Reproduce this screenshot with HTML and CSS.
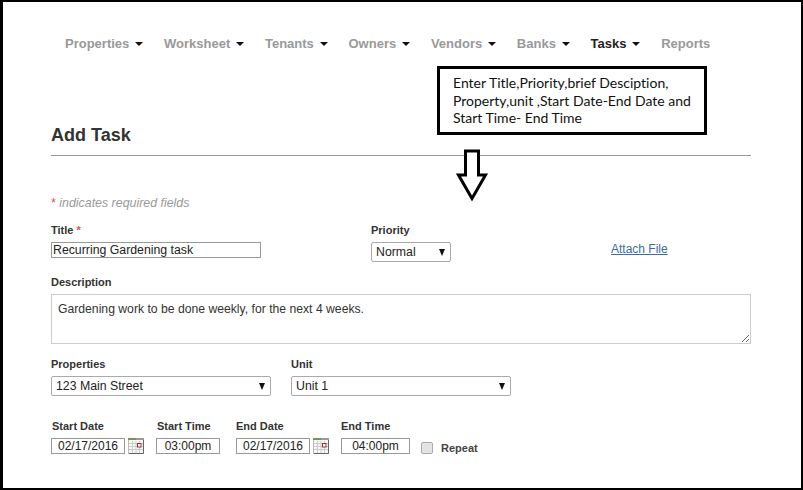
FILE: index.html
```html
<!DOCTYPE html>
<html lang="en">
<head>
<meta charset="utf-8">
<title>Add Task</title>
<link rel="stylesheet" href="styles.css">
</head>
<body>
<div class="frame">
  <nav class="nav">
    <a class="nav-item">Properties<i class="caret"></i></a>
    <a class="nav-item">Worksheet<i class="caret"></i></a>
    <a class="nav-item">Tenants<i class="caret"></i></a>
    <a class="nav-item">Owners<i class="caret"></i></a>
    <a class="nav-item">Vendors<i class="caret"></i></a>
    <a class="nav-item">Banks<i class="caret"></i></a>
    <a class="nav-item active">Tasks<i class="caret"></i></a>
    <a class="nav-item">Reports</a>
  </nav>

  <div class="callout">Enter Title,Priority,brief Desciption,<br>Property,unit ,Start Date-End Date and<br>Start Time- End Time</div>
  <svg class="arrow" width="34" height="54" viewBox="0 0 34 54"><path d="M9.5 2H22.5V26H29.5L16 49.5L2.5 26H9.5Z" fill="#fff" stroke="#000" stroke-width="3"/></svg>

  <main class="content">
    <h1 class="title">Add Task</h1>
    <p class="required"><span class="star">*</span> indicates required fields</p>

    <div class="row row-top">
      <div class="col col-title">
        <label class="label">Title <span class="star">*</span></label>
        <input class="input input-title" type="text" value="Recurring Gardening task">
      </div>
      <div class="col col-priority">
        <label class="label">Priority</label>
        <span class="select-wrap priority"><select class="select"><option>Normal</option></select></span>
      </div>
      <a class="attach" href="#">Attach File</a>
    </div>

    <div class="col col-desc">
      <label class="label">Description</label>
      <textarea class="textarea">Gardening work to be done weekly, for the next 4 weeks.</textarea>
    </div>

    <div class="row row-selects">
      <div class="col">
        <label class="label">Properties</label>
        <span class="select-wrap wide"><select class="select"><option>123 Main Street</option></select></span>
      </div>
      <div class="col">
        <label class="label">Unit</label>
        <span class="select-wrap wide"><select class="select"><option>Unit 1</option></select></span>
      </div>
    </div>

    <div class="row row-dates">
      <div class="col col-date">
        <label class="label label-inset">Start Date</label>
        <div class="date-line">
          <input class="input input-date" type="text" value="02/17/2016">
          <svg class="cal" width="16" height="16" viewBox="0 0 16 16"><rect x=".5" y=".5" width="15" height="15" fill="#f6f6f6" stroke="#bbb"/><path d="M1 5.5H15M1 8.5H15M1 11.5H15M4.5 3V15M8 3V15M11.5 3V15" stroke="#ccc" fill="none"/><rect x="0" y="0" width="16" height="2" fill="#9a9a9a"/><rect x="0" y="0" width="8" height="2" fill="#6f9a4a"/><rect x="9.5" y="5.5" width="3.5" height="3.5" fill="#fff" stroke="#a03030"/><path d="M15.5 2V15.5H1" stroke="#666" fill="none"/></svg>
        </div>
      </div>
      <div class="col col-time">
        <label class="label label-inset">Start Time</label>
        <input class="input input-time" type="text" value="03:00pm">
      </div>
      <div class="col col-date">
        <label class="label">End Date</label>
        <div class="date-line">
          <input class="input input-date" type="text" value="02/17/2016">
          <svg class="cal" width="16" height="16" viewBox="0 0 16 16"><rect x=".5" y=".5" width="15" height="15" fill="#f6f6f6" stroke="#bbb"/><path d="M1 5.5H15M1 8.5H15M1 11.5H15M4.5 3V15M8 3V15M11.5 3V15" stroke="#ccc" fill="none"/><rect x="0" y="0" width="16" height="2" fill="#9a9a9a"/><rect x="0" y="0" width="8" height="2" fill="#6f9a4a"/><rect x="9.5" y="5.5" width="3.5" height="3.5" fill="#fff" stroke="#a03030"/><path d="M15.5 2V15.5H1" stroke="#666" fill="none"/></svg>
        </div>
      </div>
      <div class="col col-endtime">
        <label class="label">End Time</label>
        <input class="input input-endtime" type="text" value="04:00pm">
      </div>
      <label class="repeat"><input class="check" type="checkbox"><span>Repeat</span></label>
    </div>
  </main>
</div>
</body>
</html>
```
FILE: styles.css
```css
* { box-sizing: border-box; }
html, body { margin: 0; padding: 0; background: #fff; }
body { font-family: "Liberation Sans", Arial, sans-serif; color: #333; }

.frame {
  position: relative;
  width: 803px;
  height: 490px;
  background: #fff;
  border-style: solid;
  border-color: #000;
  border-width: 2px 2px 2px 3px;
  overflow: hidden;
}

.nav {
  display: flex;
  gap: 21px;
  padding: 34px 0 0 62px;
  height: 100px;
}
.nav-item { font-size: 13px; line-height: 16px; font-weight: 700; color: #999; white-space: nowrap; }
.nav-item.active { color: #222; }
.caret {
  display: inline-block;
  width: 0;
  height: 0;
  margin-left: 5.7px;
  vertical-align: 2px;
  border-left: 4px solid transparent;
  border-right: 4px solid transparent;
  border-top: 4px solid #111;
}

.callout {
  position: absolute;
  left: 434px;
  top: 64px;
  width: 270px;
  height: 69px;
  border: 3px solid #000;
  padding: 5px 0 0 13px;
  background: #fff;
  font-family: "Lato", sans-serif;
  font-size: 14px;
  font-variant-ligatures: none;
  line-height: 17.5px;
  color: #111;
  white-space: nowrap;
  z-index: 2;
}
.arrow { position: absolute; left: 453px; top: 147px; z-index: 2; }

.content { padding: 0 0 0 48px; width: 748px; }
.title {
  margin: 0;
  height: 54px;
  padding-top: 22px;
  font-size: 18px;
  line-height: 22px;
  font-weight: 700;
  color: #333;
  border-bottom: 1px solid #999;
}
.required { margin: 40px 0 0; font-size: 12.4px; line-height: 14px; font-style: italic; color: #999; }
.star { color: #d9534f; font-style: normal; }

.row { display: flex; }
.col { display: flex; flex-direction: column; }
.label { display: block; font-size: 11px; line-height: 13px; font-weight: 700; color: #333; margin-bottom: 5px; }
.label-inset { padding-left: 1px; }

.row-top { margin-top: 14px; position: relative; }
.col-title { width: 320px; }
.col-priority { width: 240px; }
.attach { margin-top: 18px; font-size: 12px; line-height: 14px; color: #3a6ea5; text-decoration: underline; }

.input {
  display: block;
  height: 16px;
  padding: 0 1px;
  border: 1px solid #999;
  border-radius: 0;
  background: #fff;
  font-family: "Liberation Sans", Arial, sans-serif;
  font-size: 12px;
  color: #222;
  outline: none;
}
.input-title { width: 210px; font-size: 12.3px; }
.input-date { width: 74px; text-align: center; }
.input-time { width: 64px; text-align: center; }
.input-endtime { width: 69px; text-align: center; }

.select-wrap { position: relative; display: block; height: 20px; }
.select-wrap::after {
  content: "";
  position: absolute;
  right: 6px;
  top: 7px;
  border-left: 3.5px solid transparent;
  border-right: 3.5px solid transparent;
  border-top: 7px solid #111;
  pointer-events: none;
}
.select-wrap.priority { width: 80px; }
.select-wrap.wide { width: 220px; }
.select {
  appearance: none;
  display: block;
  width: 100%;
  height: 20px;
  padding: 0 4px;
  border: 1px solid #aaa;
  border-radius: 2px;
  background: #fff;
  font-family: "Liberation Sans", Arial, sans-serif;
  font-size: 12.3px;
  color: #222;
}

.col-desc { margin-top: 14px; }
.textarea {
  display: block;
  width: 700px;
  height: 50px;
  padding: 6px;
  border: 1px solid #ccc;
  border-radius: 0;
  font-family: "Liberation Sans", Arial, sans-serif;
  font-size: 12.2px;
  line-height: 16px;
  color: #333;
  outline: none;
}

.row-selects { gap: 20px; margin-top: 14px; }
.row-dates { margin-top: 24px; align-items: flex-start; }
.date-line { display: flex; align-items: center; gap: 3px; }
.cal { display: block; flex: none; }
.col-date { width: 105px; }
.col-time { width: 80px; }
.col-endtime { width: 80px; }

.repeat { display: flex; align-items: center; gap: 8px; margin-top: 21px; font-size: 11px; font-weight: 700; color: #444; line-height: 14px; }
.check {
  appearance: none;
  margin: 0;
  width: 12px;
  height: 12px;
  border: 1px solid #aaa;
  border-radius: 2px;
  background: #e4e4e4;
}
```
